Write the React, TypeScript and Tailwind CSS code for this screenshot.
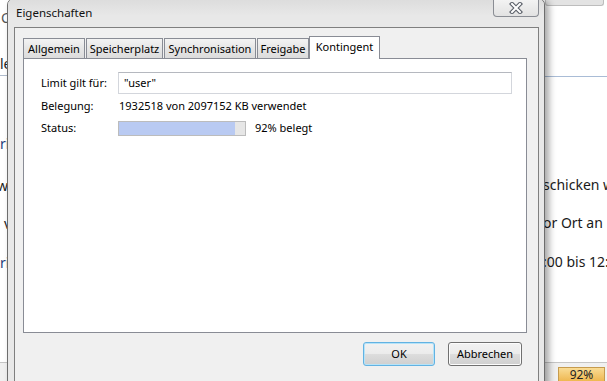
import React from "react";

function CloseX() {
  return (
    <svg width="14" height="12" viewBox="0 0 14 12">
      <path d="M3 2 L11 10 M11 2 L3 10" stroke="#5a5f68" strokeWidth="4.2" strokeLinecap="square" fill="none" />
      <path d="M3 2 L11 10 M11 2 L3 10" stroke="#ffffff" strokeWidth="2" strokeLinecap="square" fill="none" />
    </svg>
  );
}

function Tab({ label, w, active, extra }: { label: string; w: string; active?: boolean; extra?: string }) {
  if (active) {
    return (
      <div
        className={`relative z-10 -mb-px h-[23px] ${w} border border-b-0 border-[#898c95] bg-white flex justify-center pt-[2px] text-[11px] leading-[16px] ${extra ?? ""}`}
      >
        {label}
      </div>
    );
  }
  return (
    <div
      className={`h-[20px] ${w} border border-b-0 border-[#898c95] bg-[linear-gradient(#f3f3f3,#e6e6e6_50%,#dcdcdc)] flex items-center justify-center text-[11px] leading-[16px] ${extra ?? ""}`}
    >
      {label}
    </div>
  );
}

function Button({ label, w, def }: { label: string; w: string; def?: boolean }) {
  return (
    <div
      className={`${w} h-[24px] rounded-[3px] border ${
        def ? "border-[#62b2e2] shadow-[inset_0_0_0_1px_#b6e3f8]" : "border-[#707070] shadow-[inset_0_0_0_1px_#fcfcfc]"
      } bg-[linear-gradient(#f2f2f2,#ebebeb_50%,#dddddd_50%,#cfcfcf)] flex items-center justify-center text-[11px] leading-[16px]`}
    >
      {label}
    </div>
  );
}

function Dialog() {
  return (
    <div className="absolute left-[7px] top-[-2px] w-[538px] h-[400px] rounded-t-[7px] border border-[#6d6d6d] bg-[#e8e8e8] pl-[6px] pr-[5px] flex flex-col shadow-[4px_2px_7px_rgba(0,0,0,0.35)]">
      {/* title bar */}
      <div className="h-[28px] flex justify-between items-start bg-[linear-gradient(180deg,#dcdcdc,#e8e8e8_60%)] -ml-[6px] -mr-[5px] pl-[8px] pr-[5px] rounded-t-[6px]">
        <div className="leading-[28px] text-[11.5px] text-[#111]">Eigenschaften</div>
        <div className="w-[46px] h-[18px] rounded-b-[4px] border border-t-0 border-[#8a8d94] bg-[linear-gradient(#f4f4f4,#e2e2e2)] flex items-center justify-center pt-[1px]">
          <CloseX />
        </div>
      </div>
      {/* client */}
      <div className="flex-1 border border-[#7f7f7f] bg-[#f0f0f0] flex flex-col pl-[8px] pt-[8px]">
        <div className="flex items-end h-[22px]">
          <Tab label="Allgemein" w="w-[62px]" />
          <Tab label="Speicherplatz" w="w-[77px]" extra="ml-px" />
          <Tab label="Synchronisation" w="w-[92px]" extra="ml-px" />
          <Tab label="Freigabe" w="w-[52px]" extra="ml-px" />
          <Tab label="Kontingent" w="w-[71px]" active />
        </div>
        <div className="h-[275px] mr-[11px] border border-[#898c95] bg-white pl-[17px] pt-[13px] pr-[14px] flex flex-col text-[11px]">
          <div className="flex items-center h-[22px]">
            <div className="w-[77px]">Limit gilt für:</div>
            <div className="flex-1 h-[22px] border border-[#d3d6dc] border-t-[#b5b8bf] flex items-center pl-[5px]">"user"</div>
          </div>
          <div className="flex items-center h-[16px] mt-[4px]">
            <div className="w-[78px]">Belegung:</div>
            <div>1932518 von 2097152 KB verwendet</div>
          </div>
          <div className="flex items-center h-[15px] mt-[7px]">
            <div className="w-[77px]">Status:</div>
            <div className="w-[128px] h-[15px] border border-[#bcbcbc] bg-[#e6e6e6] flex">
              <div className="h-full bg-[#b9caf2]" style={{ width: "92%" }} />
            </div>
            <div className="ml-[9px]">92% belegt</div>
          </div>
        </div>
        <div className="flex justify-end mt-[9px] mr-[16px] gap-[13px]">
          <Button label="OK" w="w-[72px]" def />
          <Button label="Abbrechen" w="w-[74px]" />
        </div>
      </div>
    </div>
  );
}

export default function App() {
  return (
    <div className="relative w-[607px] h-[381px] overflow-hidden bg-white font-['Noto_Sans',sans-serif] text-black">
      <div className="flex flex-col h-full">
        <div className="flex flex-1 min-h-0">
          {/* left strip */}
          <div className="w-[12px] flex flex-col whitespace-nowrap text-[14px] leading-[14px] overflow-hidden">
            <div className="mt-[11px] h-[14px] pl-[1px] text-[#555]">C</div>
            <div className="mt-[32px] h-[14px] text-[#222]">le</div>
            <div className="mt-[4px] h-px bg-[#b0bccd]" />
            <div className="mt-[61px] h-[14px] text-[#1e3d7a]">ri</div>
            <div className="mt-[28px] h-[14px] -ml-[3px] text-[#222]">w</div>
            <div className="mt-[24px] h-[14px] pl-[4px] text-[#222]">v</div>
            <div className="mt-[25px] h-[14px] text-[#1e3d7a]">ri</div>
          </div>
          <div className="flex-1" />
          {/* right strip */}
          <div className="w-[64px] flex flex-col whitespace-nowrap text-[14px] leading-[14px] overflow-hidden text-[#1a1a1a]">
            <div className="ml-[2px] w-[59px] h-[6px] rounded-b-[3px] border border-t-0 border-[#bdbdbd] bg-[#e3e3e3]" />
            <div className="mt-[70px] h-px bg-[#a9bcd6]" />
            <div className="mt-[101px] h-[14px]">schicken w</div>
            <div className="mt-[24px] h-[14px]">or Ort an</div>
            <div className="mt-[25px] h-[14px]">:00 bis 12:00</div>
          </div>
        </div>
        {/* status bar */}
        <div className="h-[19px] border-t border-[#c5c5c5] bg-[#f0f0f0] flex justify-end items-start pr-[2px]">
          <div className="mt-[4px] w-[47px] h-[16px] border border-[#c69b4e] bg-[linear-gradient(#f9dc95,#eeb54c)] flex justify-center text-[12px] leading-[14px] text-[#222]">
            92%
          </div>
        </div>
      </div>
      <Dialog />
    </div>
  );
}
